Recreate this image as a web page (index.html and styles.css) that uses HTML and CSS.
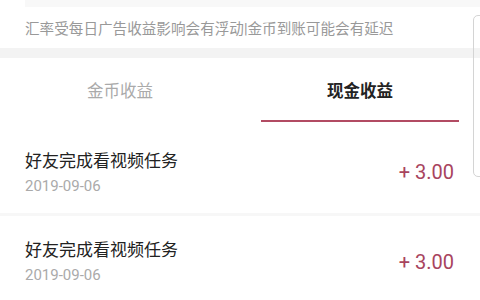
FILE: index.html
```html
<!DOCTYPE html>
<html lang="zh">
<head>
    <meta charset="UTF-8">
    <title>现金收益</title>
    <link rel="stylesheet" href="styles.css">
</head>
<body>
<div class="top-band"></div>
<p class="notice">汇率受每日广告收益影响会有浮动|金币到账可能会有延迟</p>
<div class="gap"></div>
<div class="tabs">
    <div class="tab">金币收益</div>
    <div class="tab active">现金收益</div>
</div>
<ul class="list">
    <li class="row">
        <div class="info">
            <div class="title">好友完成看视频任务</div>
            <div class="date">2019-09-06</div>
        </div>
        <span class="amount">+ 3.00</span>
    </li>
    <li class="row">
        <div class="info">
            <div class="title">好友完成看视频任务</div>
            <div class="date">2019-09-06</div>
        </div>
        <span class="amount">+ 3.00</span>
    </li>
</ul>
<!--右侧露出的半个浮层边框-->
<div class="side-box"></div>
</body>
</html>
```

FILE: styles.css
```css
* {
    margin: 0;
    padding: 0;
}

body {
    width: 480px;
    height: 300px;
    overflow: hidden;
    position: relative;
    background: #fff;
    font-family: Roboto, "Noto Sans CJK SC", sans-serif;
}

.top-band {
    margin-left: 25px;
    height: 7px;
    background: #f8f8f8;
}

.notice {
    padding: 12px 0 0 25px;
    height: 29px;
    font-size: 14.6px;
    line-height: 20px;
    color: #999;
    white-space: nowrap;
}

.gap {
    height: 10px;
    background: #f3f3f3;
}

.tabs {
    display: flex;
    height: 67px;
}

.tab {
    flex: 1;
    display: flex;
    align-items: center;
    justify-content: center;
    padding-bottom: 4px;
    font-size: 16.5px;
    color: #aaa;
    position: relative;
}

.tab.active {
    color: #222;
    font-weight: bold;
}

.tab.active::after {
    content: "";
    position: absolute;
    left: 21px;
    right: 21px;
    bottom: 3px;
    height: 2px;
    background: #b24b63;
}

.list {
    list-style: none;
}

.row {
    display: flex;
    align-items: center;
    justify-content: space-between;
    padding: 6px 26px 0 25px;
    height: 79px;
    border-top: 3px solid #f7f7f7;
}

.row:first-child {
    border-top: 0;
    height: 82px;
}

.title {
    font-size: 17px;
    line-height: 24px;
    color: #222;
}

.date {
    margin-top: 3px;
    font-size: 15px;
    line-height: 20px;
    color: #aaa;
}

.amount {
    font-size: 20px;
    color: #a8445e;
}

.side-box {
    position: absolute;
    left: 473px;
    top: 15px;
    width: 20px;
    height: 160px;
    border: 1px solid #d4d4d4;
    border-radius: 5px;
}
```
